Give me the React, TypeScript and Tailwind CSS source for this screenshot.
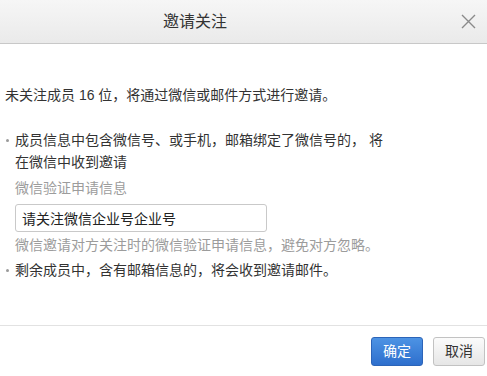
import { useState } from "react";

const font = "font-['Liberation_Sans','Noto_Sans_CJK_SC',sans-serif]";

function Bullet({ children }: { children: React.ReactNode }) {
  return (
    <div className="flex">
      <span className="w-[10px] shrink-0 flex justify-start pl-[1px] pt-[9px]">
        <span className="block w-[3px] h-[3px] rounded-full bg-[#9a9a9a]" />
      </span>
      <div className="flex-1">{children}</div>
    </div>
  );
}

export default function App() {
  const [msg, setMsg] = useState("请关注微信企业号企业号");

  return (
    <div className={`${font} w-[487px] h-[376px] bg-white text-[#333] text-[14px] leading-[21px] overflow-hidden flex flex-col`}>
      {/* Header */}
      <div className="h-[44px] shrink-0 flex items-center border-b border-[#c8c8c8] bg-gradient-to-b from-[#f6f6f6] to-[#eaeaea]">
        <span className="pl-[163px] text-[16px] text-[#333] flex-1">邀请关注</span>
        <button className="w-[16px] h-[16px] mr-[11px] flex items-center justify-center text-[#8a8a8a]">
          <svg width="15" height="15" viewBox="0 0 15 15" fill="none" stroke="currentColor" strokeWidth="1.4">
            <path d="M1 1 L14 14 M14 1 L1 14" />
          </svg>
        </button>
      </div>

      {/* Body */}
      <div className="flex-1 pl-[5px] pt-[41px]">
        <p>未关注成员 16 位，将通过微信或邮件方式进行邀请。</p>

        <div className="mt-[24px]">
          <Bullet>
            <p>成员信息中包含微信号、或手机，邮箱绑定了微信号的， 将</p>
            <p className="mt-[1px]">在微信中收到邀请</p>
            <p className="mt-[5px] text-[#9c9c9c]">微信验证申请信息</p>
            <input
              value={msg}
              onChange={(e) => setMsg(e.target.value)}
              className="mt-[5px] w-[252px] h-[28px] px-[6px] border border-[#c9c9c9] rounded-[3px] text-[14px] text-[#222] outline-none"
            />
            <p className="mt-[3px] text-[#9c9c9c]">微信邀请对方关注时的微信验证申请信息，避免对方忽略。</p>
          </Bullet>
          <div className="mt-[4px]">
            <Bullet>
              <p>剩余成员中，含有邮箱信息的，将会收到邀请邮件。</p>
            </Bullet>
          </div>
        </div>
      </div>

      {/* Footer */}
      <div className="h-[51px] shrink-0 border-t border-[#e2e2e2] flex justify-end items-start pt-[11px] pr-[2px] gap-[10px]">
        <button className="w-[52px] h-[29px] rounded-[3px] border border-[#2c64b8] bg-gradient-to-b from-[#4d93e4] to-[#2e6fcd] text-white text-[14px]">
          确定
        </button>
        <button className="w-[52px] h-[29px] rounded-[3px] border border-[#c2c2c2] bg-gradient-to-b from-[#fbfbfb] to-[#e6e6e6] text-[#333] text-[14px]">
          取消
        </button>
      </div>
    </div>
  );
}
